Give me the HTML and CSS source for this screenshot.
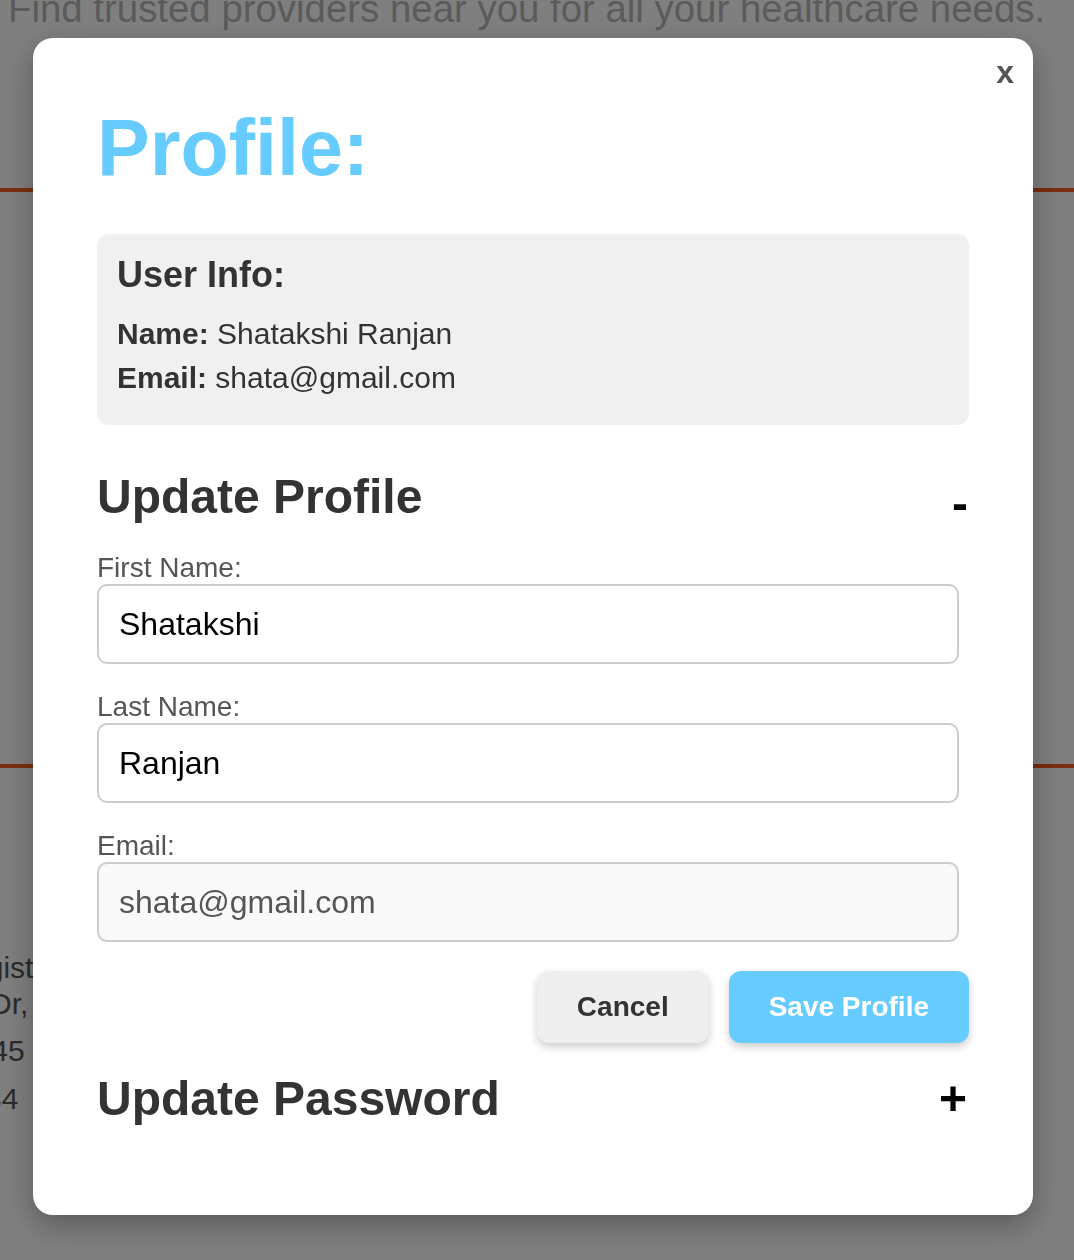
FILE: index.html
```html
<!DOCTYPE html>
<html lang="en">
<head>
<meta charset="utf-8">
<title>Profile</title>
<link rel="stylesheet" href="styles.css">
</head>
<body>
<div class="page">
  <p class="tagline">Find trusted providers near you for all your healthcare needs.</p>
  <section class="band"></section>
  <div class="provider">
    <p class="pline">Cardiologist</p>
    <p class="pline">12 Main Dr,</p>
    <p class="pline gap">NY 012345</p>
    <p class="pline gap2">555-01234</p>
  </div>
</div>

<div class="overlay">
  <div class="modal">
    <button class="close" type="button">x</button>
    <h1 class="title">Profile:</h1>

    <div class="info">
      <h3 class="info-title">User Info:</h3>
      <p class="info-line"><strong>Name:</strong> Shatakshi Ranjan</p>
      <p class="info-line"><strong>Email:</strong> shata@gmail.com</p>
    </div>

    <div class="section-head first">
      <h2 class="section-title">Update Profile</h2>
      <span class="toggle minus">-</span>
    </div>

    <form class="form">
      <div class="field">
        <label class="label" for="fn">First Name:</label>
        <input class="input" id="fn" type="text" value="Shatakshi">
      </div>
      <div class="field">
        <label class="label" for="ln">Last Name:</label>
        <input class="input" id="ln" type="text" value="Ranjan">
      </div>
      <div class="field">
        <label class="label" for="em">Email:</label>
        <input class="input readonly" id="em" type="email" value="shata@gmail.com" readonly>
      </div>
      <div class="actions">
        <button class="btn cancel" type="button">Cancel</button>
        <button class="btn save" type="button">Save Profile</button>
      </div>
    </form>

    <div class="section-head second">
      <h2 class="section-title">Update Password</h2>
      <span class="toggle plus">+</span>
    </div>
  </div>
</div>
</body>
</html>
```

FILE: styles.css
```css
* { box-sizing: border-box; }

html, body {
  margin: 0;
  padding: 0;
  height: 100%;
  overflow: hidden;
}

body {
  font-family: "Liberation Sans", Arial, sans-serif;
  background: #ffffff;
  color: #333333;
}

/* background page */
.page {
  padding: 0 8px;
}

.tagline {
  margin: -13px 0 0;
  font-size: 38.4px;
  color: #b6b6b6;
  white-space: nowrap;
}

.band {
  margin: 157px -8px 0;
  height: 580px;
  border-top: 4px solid #f45c22;
  border-bottom: 4px solid #f45c22;
}

.provider {
  margin-top: 182px;
  margin-left: -133px;
  color: #555555;
  font-size: 30px;
}

.pline {
  margin: 0;
  line-height: 36px;
  white-space: nowrap;
}

.pline.gap { margin-top: 11px; }
.pline.gap2 { margin-top: 12px; }

/* overlay + modal */
.overlay {
  position: fixed;
  inset: 0;
  background: rgba(0, 0, 0, 0.5);
  display: flex;
  justify-content: flex-start;
  align-items: flex-start;
  padding: 38px 0 0 33px;
}

.modal {
  position: relative;
  width: 1000px;
  padding: 64px;
  background: #ffffff;
  border-radius: 20px;
  box-shadow: 0 10px 30px rgba(0, 0, 0, 0.3);
}

.close {
  position: absolute;
  top: 16px;
  right: 19px;
  padding: 0;
  border: none;
  background: none;
  font-family: "Liberation Sans", Arial, sans-serif;
  font-weight: bold;
  font-size: 32px;
  line-height: normal;
  color: #555555;
  cursor: pointer;
}

.title {
  margin: 0 0 40px;
  font-size: 79px;
  font-weight: bold;
  color: #66ccff;
}

.info {
  background: #f0f0f0;
  border-radius: 12px;
  padding: 20px;
}

.info-title {
  margin: 0 0 21px;
  font-size: 36px;
  font-weight: bold;
  color: #333333;
}

.info-line {
  margin: 10px 0;
  font-size: 30px;
  color: #333333;
}

.section-head {
  display: flex;
  justify-content: space-between;
  align-items: center;
}

.section-head.first { margin-top: 44px; margin-bottom: 28px; }
.section-head.second { margin-top: 28px; margin-bottom: 25px; }

.section-title {
  margin: 0;
  font-size: 48px;
  font-weight: bold;
  color: #333333;
}

.toggle {
  font-size: 48px;
  font-weight: bold;
  color: #000000;
  line-height: 24px;
}

.toggle.minus { margin-top: 14px; margin-right: 1px; }
.toggle.plus { margin-top: 0; margin-right: 2px; }

.form {
  display: flex;
  flex-direction: column;
  gap: 27px;
}

.field {
  display: flex;
  flex-direction: column;
}

.label {
  font-size: 28px;
  line-height: 32px;
  margin-bottom: 0;
  color: #555555;
}

.input {
  width: 862px;
  height: 80px;
  padding: 0 20px;
  border: 2px solid #cccccc;
  border-radius: 10px;
  font-family: "Liberation Sans", Arial, sans-serif;
  font-size: 32px;
  color: #000000;
  background: #ffffff;
  outline: none;
}

.input.readonly {
  background: #f9f9f9;
  color: #555555;
}

.actions {
  display: flex;
  justify-content: flex-end;
  gap: 20px;
  margin-top: 2px;
}

.btn {
  padding: 20px 40px;
  border: none;
  border-radius: 12px;
  font-family: "Liberation Sans", Arial, sans-serif;
  font-size: 28px;
  line-height: 32px;
  font-weight: bold;
  box-shadow: 0 4px 8px rgba(0, 0, 0, 0.2);
  cursor: pointer;
}

.btn.cancel {
  background: #eeeeee;
  color: #333333;
}

.btn.save {
  background: #66ccff;
  color: #ffffff;
}
```
